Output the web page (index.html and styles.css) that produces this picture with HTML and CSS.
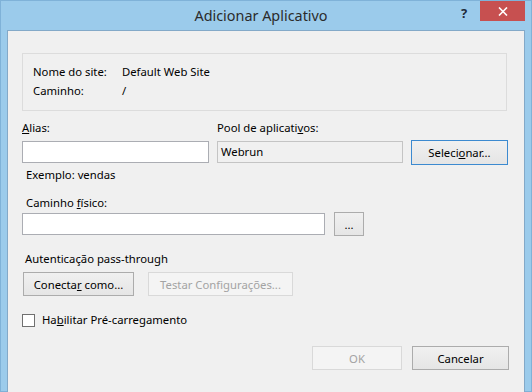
FILE: index.html
```html
<!DOCTYPE html>
<html lang="pt-BR">

<head>
    <meta charset="UTF-8">
    <title>Adicionar Aplicativo</title>
    <link rel="stylesheet" href="styles.css">
</head>

<body>
    <div class="window">
        <div class="titlebar">
            <span class="title">Adicionar Aplicativo</span>
            <span class="help">?</span>
            <span class="close">
                <svg width="10" height="9" viewBox="0 0 10 9">
                    <path d="M1 0.5 L9 8.5 M9 0.5 L1 8.5" stroke="#fff" stroke-width="1.6" fill="none" />
                </svg>
            </span>
        </div>

        <div class="client">
            <div class="info-box">
                <div class="info-row">
                    <span class="info-label">Nome do site:</span>
                    <span>Default Web Site</span>
                </div>
                <div class="info-row">
                    <span class="info-label">Caminho:</span>
                    <span>/</span>
                </div>
            </div>

            <div class="alias-grid">
                <label><u>A</u>lias:</label>
                <label>Pool de aplicati<u>v</u>os:</label>
                <span></span>
                <div class="textbox"></div>
                <div class="textbox readonly">Webrun</div>
                <button class="btn btn-default">Seleci<u>o</u>nar...</button>
            </div>

            <div class="hint">Exemplo: vendas</div>

            <label class="field-label">Caminho <u>f</u>ísico:</label>
            <div class="path-row">
                <div class="textbox path-box"></div>
                <button class="btn btn-browse">...</button>
            </div>

            <div class="section-label">Autenticação pass-through</div>
            <div class="auth-row">
                <button class="btn btn-connect">Conecta<u>r</u> como...</button>
                <button class="btn btn-test" disabled>Testar Configurações...</button>
            </div>

            <div class="check-row">
                <span class="checkbox"></span>
                <span>Ha<u>b</u>ilitar Pré-carregamento</span>
            </div>

            <div class="footer">
                <button class="btn btn-ok" disabled>OK</button>
                <button class="btn btn-cancel">Cancelar</button>
            </div>
        </div>
    </div>
</body>

</html>
```

FILE: styles.css
```css
body {
    margin: 0;
    font-family: "Noto Sans", "Open Sans", sans-serif;
    font-size: 11.3px;
    line-height: 16px;
    color: #000;
}

.window {
    width: 530px;
    height: 390px;
    background-color: #9bcbeb;
    border: 1px solid #7fb2d8;
}

.titlebar {
    height: 29px;
    position: relative;
    display: flex;
    justify-content: center;
    padding-right: 10px;
}

.title {
    margin-top: 6px;
    font-size: 14.4px;
    line-height: 18px;
    color: #2b2b2b;
}

.help {
    position: absolute;
    left: 460px;
    top: 4px;
    font-size: 13px;
    font-weight: bold;
    color: #1e2a3a;
}

.close {
    position: absolute;
    left: 479px;
    top: 0;
    width: 45px;
    height: 20px;
    background-color: #c75050;
    display: flex;
    align-items: center;
    justify-content: center;
}

.client {
    margin: 0 6px;
    height: 353px;
    background-color: #f0f0f0;
    border: 1px solid #83a9c8;
    padding: 22px 0 0 14px;
    width: 502px;
    display: flex;
    flex-direction: column;
    align-items: flex-start;
}

.info-box {
    width: 485px;
    height: 58px;
    border: 1px solid #dcdcdc;
    padding-top: 10px;
    box-sizing: border-box;
}

.info-row {
    display: flex;
    height: 19px;
    padding-left: 10px;
}

.info-label {
    width: 89px;
}

.alias-grid {
    margin-top: 9px;
    display: grid;
    grid-template-columns: 187px 186px 97px;
    column-gap: 8px;
    align-items: end;
}

.alias-grid label {
    padding-bottom: 4px;
}

.textbox {
    height: 22px;
    border: 1px solid #abadb3;
    background-color: #fff;
    box-sizing: border-box;
    padding: 2px 4px;
}

.textbox.readonly {
    background-color: #f0f0f0;
    border-color: #c4c4c4;
    padding-left: 3px;
}

.btn {
    font-family: inherit;
    font-size: 11.3px;
    color: #000;
    height: 24px;
    border: 1px solid #acacac;
    background: linear-gradient(#f0f0f0, #e5e5e5);
    padding: 0;
    margin: 0;
}

.btn-default {
    height: 25px;
    border-color: #3c8ad0;
    margin-bottom: -2px;
}

.btn:disabled {
    border-color: #d9d9d9;
    background: #f4f4f4;
    color: #a3a3a3;
}

.hint {
    margin-top: 4px;
    margin-left: 4px;
}

.field-label {
    margin-top: 12px;
    margin-left: 4px;
}

.path-row {
    margin-top: 1px;
    display: flex;
    align-items: center;
    gap: 9px;
}

.path-box {
    width: 303px;
}

.btn-browse {
    width: 30px;
}

.section-label {
    margin-top: 15px;
    margin-left: 3px;
}

.auth-row {
    margin-top: 5px;
    margin-left: 1px;
    display: flex;
    gap: 14px;
}

.btn-connect {
    width: 111px;
}

.btn-test {
    width: 145px;
}

.check-row {
    margin-top: 16px;
    display: flex;
    align-items: center;
    gap: 7px;
}

.checkbox {
    width: 11px;
    height: 11px;
    border: 1px solid #707070;
    background-color: #fff;
}

.footer {
    margin-top: 18px;
    align-self: flex-end;
    margin-right: 15px;
    display: flex;
    gap: 10px;
}

.btn-ok {
    width: 90px;
}

.btn-cancel {
    width: 97px;
}
```
